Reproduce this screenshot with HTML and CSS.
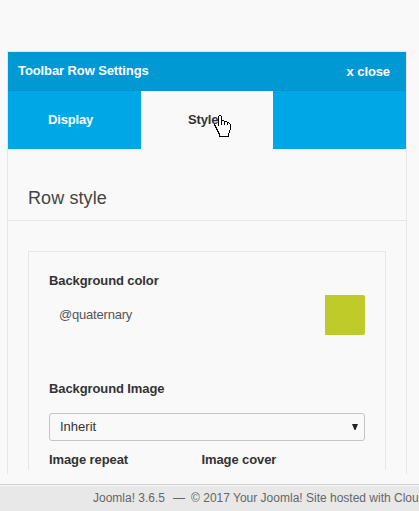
FILE: index.html
```html
<!DOCTYPE html>
<html lang="en">
<head>
<meta charset="utf-8">
<title>Toolbar Row Settings</title>
<link rel="stylesheet" href="styles.css">
</head>
<body>
<main class="panel">
  <header class="panel-header"><span class="title">Toolbar Row Settings</span><span class="close">x close</span></header>
  <nav class="tabs">
    <div class="tab"><span>Display</span></div>
    <div class="tab active"><span>Style</span>
      <svg class="cursor" width="17" height="22" viewBox="0 0 17 22" shape-rendering="crispEdges"><path d="M5 0h2v1h1v4h2v1h3v1h2v1h1v1h1v6h-1v3h-1v4h-10v-3h-1v-2h-1v-2h-1v-2h-1v-2h-1v-2h3v1h1v-9h1z" fill="#000"/><path d="M5 1h2v9h1v-4h2v4h1v-3h2v3h1v-2h1v1h1v6h-1v3h-1v3h-8v-3h-1v-2h-1v-2h-1v-2h-1v-2h-1v-1h2v1h1v1h1z" fill="#fff"/></svg>
    </div>
    <div class="tab"></div>
  </nav>
  <h2 class="section-title"><span>Row style</span></h2>
  <section class="box">
    <div class="label">Background color</div>
    <div class="color-field"><span>@quaternary</span><i class="swatch"></i></div>
    <div class="label image-label">Background Image</div>
    <div class="select"><span>Inherit</span><svg width="6" height="6" viewBox="0 0 6 6"><path d="M0 0h6L3.5 6h-1z" fill="#222"/></svg></div>
    <div class="columns"><div class="label">Image repeat</div><div class="label">Image cover</div></div>
  </section>
</main>
<footer class="footer"><span>Joomla! 3.6.5</span><span class="dash">—</span><span class="copyright">© 2017 Your Joomla! Site hosted with Clou</span></footer>
</body>
</html>
```
FILE: styles.css
```css
* { box-sizing: border-box; }
body {
  margin: 0;
  height: 511px;
  padding-top: 51px;
  overflow: hidden;
  background: #f9f9f9;
  color: #333;
  font: 13px/20px "Liberation Sans", Arial, sans-serif;
}
.panel {
  width: 400px;
  height: 423px;
  margin-left: 7px;
  border: 1px solid #e6e6e6;
  border-bottom: 0;
}
.panel-header {
  display: flex;
  justify-content: space-between;
  height: 39px;
  padding: 9px 16px 0 10px;
  background: #0099d4;
  border-bottom: 1px solid #0092cc;
  color: #fff;
  font-weight: bold;
}
.title { letter-spacing: -.1px; }
.close { padding-top: 1px; letter-spacing: -.1px; }
.tabs {
  display: grid;
  grid-template-columns: 133px 132px 133px;
  height: 58px;
}
.tab {
  position: relative;
  padding: 19px 0 0 40px;
  background: #00a7e7;
  color: #fff;
  font-weight: bold;
  letter-spacing: -.15px;
}
.tab.active { padding-left: 47px; background: #f9f9f9; color: #333; }
.cursor { position: absolute; left: 73px; top: 24px; }
.section-title {
  height: 72px;
  margin: 0;
  padding: 39px 0 0 20px;
  border-bottom: 1px solid #e6e6e6;
  font-size: 18px;
  font-weight: normal;
  letter-spacing: .1px;
  color: #444;
}
.box {
  width: 358px;
  height: 219px;
  margin: 30px 0 0 20px;
  padding: 19px 20px 0;
  border: 1px solid #e6e6e6;
  border-bottom: 0;
}
.label { font-weight: bold; letter-spacing: -.1px; }
.color-field {
  display: flex;
  justify-content: space-between;
  align-items: center;
  height: 40px;
  margin-top: 4px;
  padding-left: 10px;
  color: #555;
  letter-spacing: -.2px;
}
.swatch { width: 40px; height: 40px; background: #bfcb29; border-radius: 0 2px 2px 0; }
.image-label { margin-top: 44px; }
.select {
  display: flex;
  align-items: center;
  justify-content: space-between;
  height: 28px;
  margin-top: 14px;
  padding: 0 6px 0 10px;
  border: 1px solid #c4c4c4;
  border-radius: 3px;
}
.columns { display: grid; grid-template-columns: 152.5px 1fr; margin-top: 9px; }
.footer {
  display: flex;
  width: 419px;
  height: 27px;
  margin-top: 10px;
  padding: 3px 0 0 93px;
  background: #e8e8e8;
  border-top: 1px solid #d0d0d0;
  box-shadow: inset 0 1px #f7f7f7;
  color: #666;
  font-size: 12px;
  white-space: nowrap;
}
.dash { margin: 0 6px 0 8px; }
```
